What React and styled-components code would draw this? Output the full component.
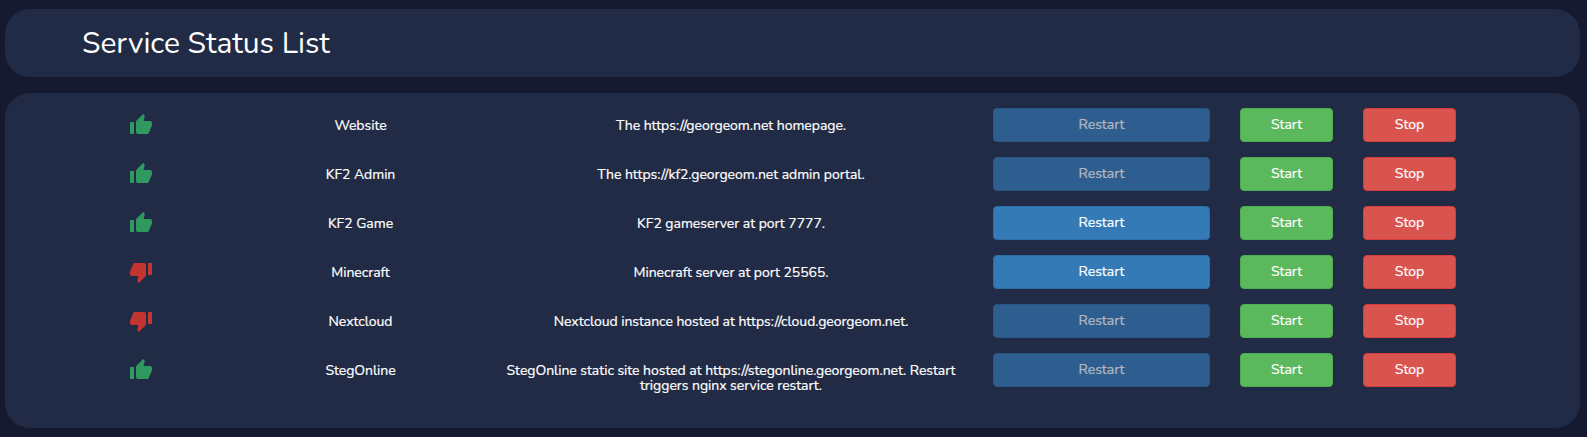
import React from "react";
import styled, { createGlobalStyle } from "styled-components";

const GlobalStyle = createGlobalStyle`
  * { box-sizing: border-box; }
  body {
    margin: 0;
    background: #151a30;
    color: #fff;
    font-family: Nunito, Lato, "Open Sans", sans-serif;
    font-size: 14px;
    line-height: 15px;
  }
`;

const Page = styled.main`
  display: flex;
  flex-direction: column;
  gap: 16px;
  padding: 9px 7px 9px 5px;
  min-height: 437px;
`;

const Panel = styled.section`
  background: #222b45;
  border-radius: 25px;
`;

const Header = styled(Panel)`
  display: flex;
  align-items: center;
  height: 68px;
  padding: 2px 77px 0;
`;

const Title = styled.h1`
  margin: 0;
  font-size: 30px;
  font-weight: 400;
  line-height: 36px;
  letter-spacing: -0.02px;
`;

const List = styled(Panel)`
  display: flex;
  flex-direction: column;
  gap: 15px;
  height: 335px;
  padding: 15px 109px 0 40px;
`;

const Row = styled.div`
  display: grid;
  grid-template-columns: 192px 247px 494px 247px 123px 123px;
  height: 34px;
`;

const Cell = styled.div`
  padding: 0 15px;
  text-align: center;
`;

const TextCell = styled(Cell)`
  padding-top: 10px;
  letter-spacing: -0.035px;
  -webkit-text-stroke: 0.2px currentColor;
`;

const StatusIcon = styled.svg`
  display: block;
  width: 24px;
  height: 24px;
  margin: 5px auto 0;
  fill: ${({ $up }) => ($up ? "#2f9960" : "#c23531")};
`;

const tones = {
  primary: ["#337ab7", "#2e6da4"],
  success: ["#5cb85c", "#4cae4c"],
  danger: ["#d9534f", "#d43f3a"],
};

const Button = styled.button`
  display: block;
  width: 100%;
  height: 34px;
  padding: 0;
  border: 1px solid ${({ $tone }) => tones[$tone][1]};
  border-radius: 4px;
  background: ${({ $tone }) => tones[$tone][0]};
  color: #fff;
  font: inherit;
  line-height: 20px;
  -webkit-text-stroke: 0.2px currentColor;
  opacity: ${({ disabled }) => (disabled ? 0.65 : 1)};
`;

const services = [
  { name: "Website", up: true, description: "The https://georgeom.net homepage." },
  { name: "KF2 Admin", up: true, description: "The https://kf2.georgeom.net admin portal." },
  { name: "KF2 Game", up: true, restart: true, description: "KF2 gameserver at port 7777." },
  { name: "Minecraft", up: false, restart: true, description: "Minecraft server at port 25565." },
  { name: "Nextcloud", up: false, description: "Nextcloud instance hosted at https://cloud.georgeom.net." },
  {
    name: "StegOnline",
    up: true,
    description:
      "StegOnline static site hosted at https://stegonline.georgeom.net. Restart triggers nginx service restart.",
  },
];

function Thumb({ up }) {
  return (
    <StatusIcon viewBox="0 0 24 24" $up={up}>
      {up ? (
        <path d="M23 10a2 2 0 0 0-2-2h-6.32l.96-4.57c.02-.1.03-.21.03-.32 0-.41-.17-.79-.44-1.06L14.17 1 7.59 7.58C7.22 7.95 7 8.45 7 9v10a2 2 0 0 0 2 2h9c.83 0 1.54-.5 1.84-1.22l3.02-7.05c.09-.23.14-.47.14-.73v-2M1 21h4V9H1v12z" />
      ) : (
        <path d="M19 15h4V3h-4m-4 0H6c-.83 0-1.54.5-1.84 1.22l-3.02 7.05c-.09.23-.14.47-.14.73v2a2 2 0 0 0 2 2h6.31l-.95 4.57c-.02.1-.03.2-.03.31 0 .42.17.79.44 1.06L9.83 23l6.58-6.59c.37-.36.59-.86.59-1.41V5a2 2 0 0 0-2-2z" />
      )}
    </StatusIcon>
  );
}

function ServiceRow({ service }) {
  return (
    <Row>
      <Cell><Thumb up={service.up} /></Cell>
      <TextCell>{service.name}</TextCell>
      <TextCell>{service.description}</TextCell>
      <Cell><Button $tone="primary" disabled={!service.restart}>Restart</Button></Cell>
      <Cell><Button $tone="success">Start</Button></Cell>
      <Cell><Button $tone="danger">Stop</Button></Cell>
    </Row>
  );
}

export default function App() {
  return (
    <>
      <GlobalStyle />
      <Page>
        <Header><Title>Service Status List</Title></Header>
        <List>
          {services.map((service) => (
            <ServiceRow key={service.name} service={service} />
          ))}
        </List>
      </Page>
    </>
  );
}
